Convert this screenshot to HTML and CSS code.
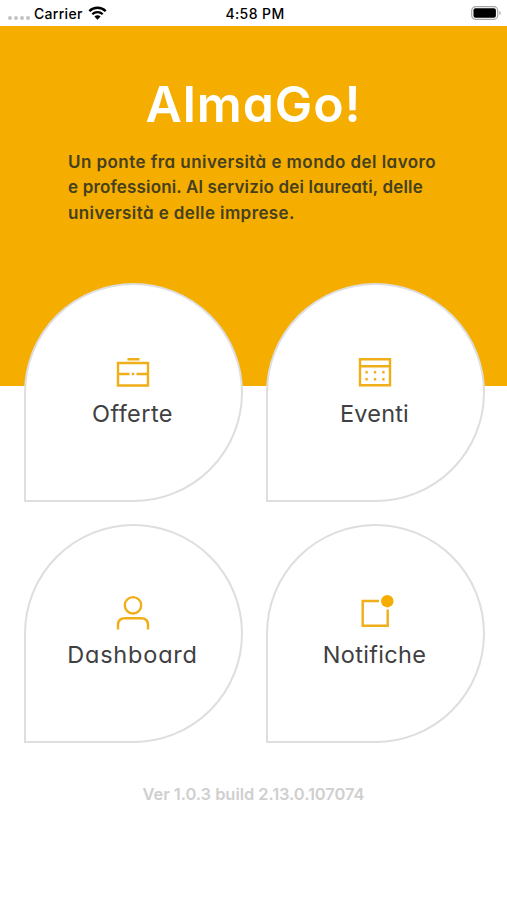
FILE: index.html
```html
<!DOCTYPE html>
<html lang="it">
<head>
<meta charset="UTF-8">
<meta name="viewport" content="width=device-width,initial-scale=1.0">
<title>AlmaGo!</title>
<link rel="stylesheet" href="styles.css">
</head>
<body>
<div class="status">
<div class="status-left">
<span class="signal"><i></i><i></i><i></i><i></i></span>
<span class="carrier">Carrier</span>
<svg class="wifi" width="19" height="14" viewBox="0 0 19 14">
<path d="M1.3 5.1a11.7 11.7 0 0 1 16.4 0" fill="none" stroke="#000" stroke-width="2.4"/>
<path d="M4.3 8.3a7.4 7.4 0 0 1 10.4 0" fill="none" stroke="#000" stroke-width="2.3"/>
<path d="M6.4 10.5a4.4 4.4 0 0 1 6.2 0L9.5 13.7z"/>
</svg>
</div>
<span class="time">4:58 PM</span>
<div class="status-right">
<svg width="31" height="14" viewBox="0 0 31 14">
<rect x=".7" y=".7" width="26" height="12.6" rx="3.8" fill="none" stroke="#a5a5a5" stroke-width="1.2"/>
<rect x="2.5" y="2.2" width="22.4" height="9.6" rx="2"/>
<path d="M28.4 5v4c1.8-.7 1.8-3.3 0-4z" fill="#a5a5a5"/>
</svg>
</div>
</div>
<header class="hero">
<h1>AlmaGo!</h1>
<p>
<span class="line1">Un ponte fra università e mondo del lavoro</span><br>
<span class="line2">e professioni. Al servizio dei laureati, delle</span><br>
<span class="line3">università e delle imprese.</span>
</p>
</header>
<main class="tiles">
<a class="tile">
<svg class="icon" width="34" height="30" viewBox="0 0 34 30">
<path d="M11.5 1.2h12M2 5h30v22.5H2zM2 16h11.5M20.5 16H32M15.8 16h2.4"/>
</svg>
<span class="label offerte">Offerte</span>
</a>
<a class="tile">
<svg class="icon" width="34" height="30" viewBox="0 0 34 30">
<path d="M2 1.2h30v26H2zM2 8.2h30"/>
<path class="dots" d="M7.4 14.3h2.4M15.8 14.3h2.4M24.2 14.3h2.4M7.4 21.3h2.4M15.8 21.3h2.4M24.2 21.3h2.4"/>
</svg>
<span class="label eventi">Eventi</span>
</a>
<a class="tile low">
<svg class="icon" width="34" height="34" viewBox="0 0 34 34">
<circle cx="17" cy="10.3" r="8.2"/>
<path d="M2 34.5V30c0-4.500 2.500-6.800 7-6.800h16c4.500 0 7 2.300 7 6.800v4.500"/>
</svg>
<span class="label dashboard">Dashboard</span>
</a>
<a class="tile low">
<svg class="icon" width="34" height="34" viewBox="0 0 34 34">
<path d="M21 6H4.700v24.800h25V14.500"/>
<circle class="badge" cx="29.300" cy="6.200" r="6.200"/>
</svg>
<span class="label notifiche">Notifiche</span>
</a>
</main>
<footer class="version">Ver 1.0.3 build 2.13.0.107074</footer>
</body>
</html>
```

FILE: styles.css
```css
body{
margin:0;
background:#fff;
color:#404042;
font-family:Inter,"Open Sans",sans-serif;
font-feature-settings:"cv11";
}
.status{
display:grid;
grid-template-columns:1fr auto 1fr;
align-items:center;
height:26px;
box-sizing:border-box;
padding:0 5px 0 8px;
color:#000;
font-size:14px;
font-weight:500;
font-feature-settings:normal;
}
.status-left{
display:flex;
align-items:center;
}
.signal{
display:flex;
gap:2px;
margin:9px 4px 0 0;
}
.signal i{
width:4px;
height:4px;
border-radius:50%;
background:#c4c4c4;
}
.carrier{
letter-spacing:.3px;
}
.time{
letter-spacing:.4px;
}
.wifi{
margin-left:5px;
}
.status-right{
display:flex;
justify-content:flex-end;
}
.hero{
height:360px;
box-sizing:border-box;
padding-top:48px;
background:#f5ae00;
}
h1{
margin:0;
color:#fff;
font-size:50px;
font-weight:600;
line-height:60px;
letter-spacing:.9px;
text-align:center;
}
.hero p{
margin:15.500px 0 0 68px;
color:#45401f;
font-size:17px;
font-weight:600;
line-height:25.700px;
white-space:nowrap;
}
.line1{
letter-spacing:.44px;
}
.line2{
letter-spacing:.16px;
}
.line3{
letter-spacing:.4px;
}
.tiles{
display:grid;
grid-template-columns:219px 219px;
gap:22px 23px;
margin:-103px 0 0 24px;
}
.tile{
display:flex;
flex-direction:column;
align-items:center;
box-sizing:border-box;
height:219px;
padding:73px 2px 0 0;
border:2px solid #dedede;
border-radius:50% 50% 50% 0;
background:#fff;
}
.tile.low{
padding-top:69px;
}
.icon{
overflow:visible;
fill:none;
stroke:#f0ae19;
stroke-width:2.4;
}
.dots{
stroke-width:2.6;
}
.badge{
fill:#f5ae00;
stroke:none;
}
.label{
margin-top:10px;
font-size:23.5px;
font-weight:400;
line-height:32px;
}
.offerte{
letter-spacing:.45px;
}
.eventi{
letter-spacing:.2px;
}
.dashboard{
letter-spacing:.8px;
}
.notifiche{
letter-spacing:.3px;
}
.version{
margin-top:40px;
color:#cfcfcf;
font-size:16.5px;
font-weight:600;
line-height:22px;
letter-spacing:-.07px;
text-align:center;
}
```
